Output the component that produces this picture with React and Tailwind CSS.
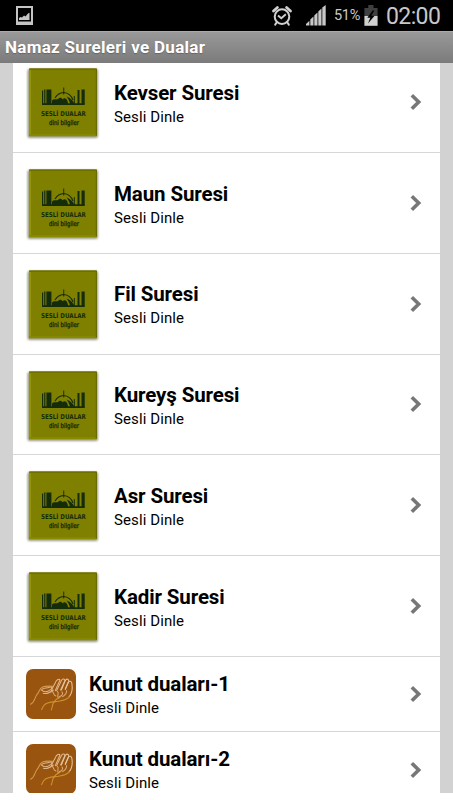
import React from "react";

const sureler = [
  { id: 1, title: "Kevser Suresi" },
  { id: 2, title: "Maun Suresi" },
  { id: 3, title: "Fil Suresi" },
  { id: 4, title: "Kureyş Suresi" },
  { id: 5, title: "Asr Suresi" },
  { id: 6, title: "Kadir Suresi" },
];

const dualar = [
  { id: 7, title: "Kunut duaları-1" },
  { id: 8, title: "Kunut duaları-2" },
];

const PictureIcon = () => (
  <svg width="17" height="19" viewBox="0 0 17 19">
    <path d="M0 0h17v19H0z" fill="#c4c4c4" />
    <path d="M2 2h13v13.500H2z" fill="#000" />
    <path d="M3 14v-2l1.500-1 1.500 .6 2-2 1.500 1L12 7.500l1.500-.8V14z" fill="#c4c4c4" />
  </svg>
);

const AlarmIcon = () => (
  <svg width="20" height="20" viewBox="0 0 20 20" fill="none" stroke="#d0d0d0">
    <circle cx="10" cy="10.6" r="7.3" strokeWidth="2" />
    <path d="M1.500 5 5.400 1.500M18.500 5 14.600 1.500" strokeWidth="2.700" strokeLinecap="round" />
    <path d="M4.800 16.200 3.200 18.600M15.200 16.200l1.600 2.400" strokeWidth="2" strokeLinecap="round" />
    <path d="M6 9.600 9.300 12.300l4.500-4" strokeWidth="1.900" />
  </svg>
);

const SignalIcon = () => (
  <svg width="20" height="21" viewBox="0 0 20 21" fill="#c8c8c8">
    <path d="M0 20.500v-1.600l3.400-3.200v4.800z" />
    <path d="M4.300 20.500v-6l3.200-3v9z" />
    <path d="M8.300 20.500V10.400l3.200-3v13.100z" />
    <path d="M12.300 20.500V6.400l3.200-3v17.100z" />
    <path d="M16.300 20.500V2.600l3.400-2.600v20.500z" />
  </svg>
);

const BatteryIcon = () => (
  <svg width="14" height="21" viewBox="0 0 14 21">
    <path d="M4.300 0h5.200v3h4.100v8H.4V3h3.900z" fill="#3f3f3f" />
    <path d="M.4 11h13.200v9.800H.4z" fill="#d0d0d0" />
    <path d="M8.600 5.500 3.300 12.800h3L4 18.600l6.600-7.800H7.400l3-5.300z" fill="#000" />
  </svg>
);

const MosqueTile = () => (
  <svg className="ml-[13px] mt-[15px] shrink-0" width="74" height="74" viewBox="0 0 74 74">
    <defs>
      <filter id="tileShadow" x="-10%" y="-10%" width="120%" height="120%">
        <feGaussianBlur stdDeviation="0.9" />
      </filter>
    </defs>
    <rect x="1.500" y="2" width="70.500" height="69" rx="2" fill="#555530" opacity="0.6" filter="url(#tileShadow)" />
    <rect x="3" y="1.500" width="68" height="67.500" rx="1.500" fill="#808000" />
    <path d="M3 3h2v65H3z" fill="#959500" />
    <path d="M3 67.300h68v1.900H3z" fill="#8a8a00" />
    <path d="M3 1.500h68v1.300H3zM69.800 2H71v66.500h-1.200z" fill="#6a6a00" />
    <g fill="#152c0a">
      <path d="M16 23.500h1.200V37H16zM18.200 22.500h1.200V37h-1.200zM20.400 22.500h5V37h-5z" />
      <path d="M47.800 29h1v8h-1zM51.500 23h2v14h-2zM55.500 22.500h3.200V37h-3.200z" />
      <path d="M16 36.200h42.700v1.800H16z" />
      <path d="M26 33.500c2-2.600 4-.4 6-1.500 1.500-2 3.500-1.500 4.500.2 2-1.500 3.600-1 4.800 1.300l1 3.500H26z" />
      <path d="M37.300 20.500h.9v7h-.9z" />
      <path d="M40.500 29.500c4 1.500 6.500 4 8 7.500h-4.500c-.5-3-1.800-5.500-3.500-7.500z" />
    </g>
    <path d="M29 31c2.500-4 5-5.300 8.500-5.500 4.500.3 8 3.300 9.500 7.500" fill="none" stroke="#152c0a" strokeWidth="1.100" />
    <g fill="#152c0a" textAnchor="middle" fontFamily="'DejaVu Sans', sans-serif">
      <text x="37.400" y="49" fontSize="6.600" fontWeight="bold" textLength="45" lengthAdjust="spacingAndGlyphs">
        SESLİ DUALAR
      </text>
      <text x="38" y="57.800" fontSize="6.600" stroke="#152c0a" strokeWidth="0.350" textLength="30" lengthAdjust="spacingAndGlyphs">
        dini bilgiler
      </text>
    </g>
  </svg>
);

const HandsTile = () => (
  <svg className="ml-[13px] mt-3 shrink-0" width="51" height="51" viewBox="0 0 51 51">
    <rect x="0" y="0" width="50" height="50" rx="7" fill="#99540f" />
    <g
      transform="translate(-2 -3) scale(0.333)"
      fill="none"
      strokeLinecap="round"
      strokeLinejoin="round"
      strokeWidth="3.200"
    >
      <path d="M20 115c12-6 12-20 18-28 8-8 8-20 18-24 8-3 20-3 30-2" stroke="#d39a50" />
      <path d="M52 72c6-8 16-4 24-8 8-3 10 3 4 7-8 6-18 11-28 1zM58 82c10 3 20-2 30-10" stroke="#dcb58c" />
      <path d="M82 76c2-10 8-18 12-26 4-10 12-12 14-8l-14 32" stroke="#e0b88c" />
      <path d="M98 74l14-30c4-8 12-6 10 2l-12 26" stroke="#e0b88c" />
      <path d="M112 72l12-28c4-8 12-4 10 4l-10 22" stroke="#e6c49c" />
      <path d="M124 70l8-20c4-8 12-4 12 4 2 14 2 26-8 38" stroke="#e6c49c" />
      <path d="M84 76c8 4 2 12 12 14M100 76c8 6-4 14 4 20M114 78c6 6-2 12-8 14M128 74c0 10-6 14-12 18" stroke="#dba973" />
      <path d="M136 92c-10 12-22 12-34 14-14 2-34 2-42 12-4 5-5 9-7 13" stroke="#cc922b" />
      <path d="M108 94c-10 4-16 10-20 18-3 7-4 14-6 20" stroke="#cc922b" />
    </g>
  </svg>
);

const Chevron = () => (
  <svg className="ml-auto mr-[18px] self-center shrink-0" width="12" height="18" viewBox="0 0 12 18">
    <path d="M1.800 2.200 8.700 9l-6.900 6.800" fill="none" stroke="#777" strokeWidth="3.600" />
  </svg>
);

const RowText = ({ title }) => (
  <div className="text-black whitespace-nowrap">
    <h2 className="text-[20.500px] leading-6 tracking-[-0.120px] font-bold">{title}</h2>
    <p className="text-[15px] leading-6 tracking-[0.1px]">Sesli Dinle</p>
  </div>
);

const App = () => {
  return (
    <div className="w-[453px] h-[800px] flex flex-col bg-white overflow-hidden font-['Roboto',sans-serif]">
      <div className="h-[31px] shrink-0 flex items-center bg-black text-[#c8c8c8] pl-4 pr-3">
        <PictureIcon />
        <div className="ml-auto flex items-center">
          <AlarmIcon />
          <div className="ml-[14px]">
            <SignalIcon />
          </div>
          <span className="ml-2 w-[27px] pt-px text-[14.500px] tracking-[-0.3px] whitespace-nowrap">51%</span>
          <div className="ml-[3px]">
            <BatteryIcon />
          </div>
          <span className="ml-2 w-[55px] pt-[3px] text-[23px] leading-[28px] tracking-[-0.600px] whitespace-nowrap">
            02:00
          </span>
        </div>
      </div>

      <div className="h-8 shrink-0 flex items-center bg-linear-to-b from-[#999] to-[#7b7b7b] border-t border-[#aaa] pl-[5px]">
        <h1 className="text-[17px] tracking-[0.300px] font-bold text-white whitespace-nowrap [text-shadow:0_1px_1px_#666]">
          Namaz Sureleri ve Dualar
        </h1>
      </div>

      <div className="h-[730px] shrink-0 overflow-hidden bg-[#d2d2d2] px-[13px]">
        <div className="-mt-[10.750px] bg-white">
          {sureler.map((item) => (
            <div key={item.id} className="h-[100.750px] flex border-b border-[#d6d6d6]">
              <MosqueTile />
              <div className="ml-[14px] mt-[28.600px]">
                <RowText title={item.title} />
              </div>
              <Chevron />
            </div>
          ))}
          {dualar.map((item) => (
            <div key={item.id} className="h-[75.500px] flex border-b border-[#d6d6d6]">
              <HandsTile />
              <div className="ml-3 mt-[15px]">
                <RowText title={item.title} />
              </div>
              <Chevron />
            </div>
          ))}
        </div>
      </div>
    </div>
  );
};

export default App;
